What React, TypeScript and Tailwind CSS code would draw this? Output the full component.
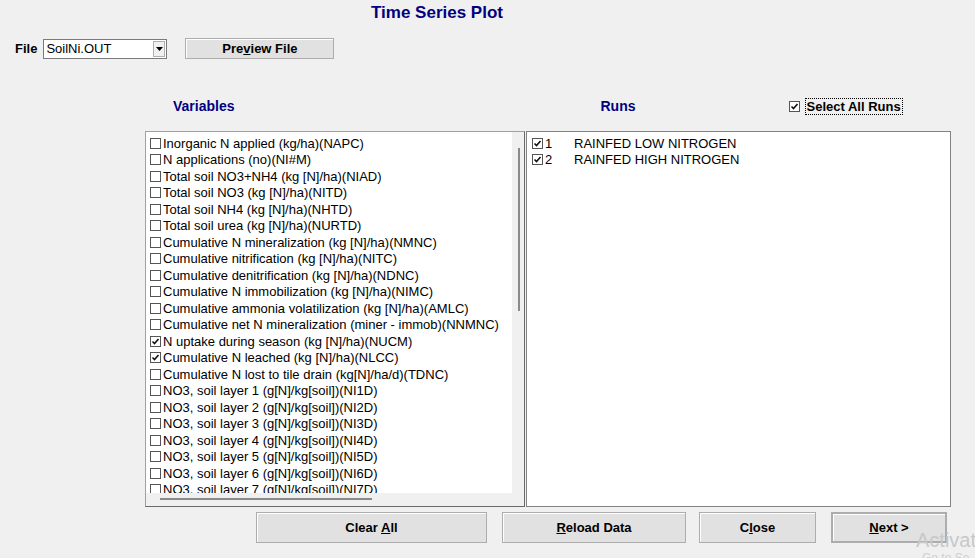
import React from 'react';

const VARIABLES: { label: string; checked: boolean }[] = [
  { label: 'Inorganic N applied (kg/ha)(NAPC)', checked: false },
  { label: 'N applications (no)(NI#M)', checked: false },
  { label: 'Total soil NO3+NH4 (kg [N]/ha)(NIAD)', checked: false },
  { label: 'Total soil NO3 (kg [N]/ha)(NITD)', checked: false },
  { label: 'Total soil NH4 (kg [N]/ha)(NHTD)', checked: false },
  { label: 'Total soil urea (kg [N]/ha)(NURTD)', checked: false },
  { label: 'Cumulative N mineralization (kg [N]/ha)(NMNC)', checked: false },
  { label: 'Cumulative nitrification (kg [N]/ha)(NITC)', checked: false },
  { label: 'Cumulative denitrification (kg [N]/ha)(NDNC)', checked: false },
  { label: 'Cumulative N immobilization (kg [N]/ha)(NIMC)', checked: false },
  { label: 'Cumulative ammonia volatilization (kg [N]/ha)(AMLC)', checked: false },
  { label: 'Cumulative net N mineralization (miner - immob)(NNMNC)', checked: false },
  { label: 'N uptake during season (kg [N]/ha)(NUCM)', checked: true },
  { label: 'Cumulative N leached (kg [N]/ha)(NLCC)', checked: true },
  { label: 'Cumulative N lost to tile drain (kg[N]/ha/d)(TDNC)', checked: false },
  { label: 'NO3, soil layer 1 (g[N]/kg[soil])(NI1D)', checked: false },
  { label: 'NO3, soil layer 2 (g[N]/kg[soil])(NI2D)', checked: false },
  { label: 'NO3, soil layer 3 (g[N]/kg[soil])(NI3D)', checked: false },
  { label: 'NO3, soil layer 4 (g[N]/kg[soil])(NI4D)', checked: false },
  { label: 'NO3, soil layer 5 (g[N]/kg[soil])(NI5D)', checked: false },
  { label: 'NO3, soil layer 6 (g[N]/kg[soil])(NI6D)', checked: false },
  { label: 'NO3, soil layer 7 (g[N]/kg[soil])(NI7D)', checked: false },
];

const RUNS = [
  { id: 1, name: 'RAINFED LOW NITROGEN' },
  { id: 2, name: 'RAINFED HIGH NITROGEN' },
];

const CheckBox: React.FC<{ checked: boolean }> = ({ checked }) => (
  <span className="flex h-[11px] w-[11px] shrink-0 items-center justify-center border border-[#555] bg-white">
    {checked && (
      <svg width="9" height="9" viewBox="0 0 9 9">
        <path d="M1.5 4.5 L3.5 6.5 L7.5 2" fill="none" stroke="#111" strokeWidth="1.6" />
      </svg>
    )}
  </span>
);

const WinButton: React.FC<{ className?: string; children: React.ReactNode }> = ({ className, children }) => (
  <button
    className={`flex items-center justify-center border border-[#adadad] bg-[#e1e1e1] text-[13px] font-bold text-black shadow-[inset_1px_1px_0_#fff] ${className ?? ''}`}
  >
    {children}
  </button>
);

export default function App() {
  return (
    <div
      className="relative h-[558px] w-[975px] overflow-hidden bg-[#f0f0f0] text-black"
      style={{ fontFamily: '"Liberation Sans", Arial, sans-serif' }}
    >
      {/* title */}
      <div className="pl-[371px] pt-[3px] text-[17px] font-bold leading-[20px] text-[#000080]">Time Series Plot</div>

      {/* file row */}
      <div className="mt-[15px] flex items-center pl-[15px]">
        <span className="text-[13px] font-bold">File</span>
        <div className="ml-[6px] flex h-[20px] w-[124px] items-center justify-between border border-[#7a7a7a] bg-white pl-[2px] pr-[1px]">
          <span className="text-[13px]">SoilNi.OUT</span>
          <span className="flex h-[16px] w-[12px] items-center justify-center border border-[#b0b0b0] bg-[#f0f0f0]">
            <svg width="7" height="4" viewBox="0 0 7 4">
              <path d="M0 0 H7 L3.5 4 Z" fill="#000" />
            </svg>
          </span>
        </div>
        <WinButton className="ml-[18px] h-[21px] w-[149px]">
          <span>
            Pre<span className="underline">v</span>iew File
          </span>
        </WinButton>
      </div>

      {/* headings */}
      <div className="mt-[38px] flex h-[18px] items-center">
        <span className="ml-[173px] text-[14px] font-bold text-[#000080]">Variables</span>
        <span className="ml-[366px] text-[14px] font-bold text-[#000080]">Runs</span>
        <div className="ml-[153px] flex items-center">
          <CheckBox checked />
          <span className="ml-[5px] border border-dotted border-black px-[1px] text-[13px] font-bold leading-[15px]">
            Select All Runs
          </span>
        </div>
      </div>

      {/* lists */}
      <div className="mt-[16px] flex h-[376px] pl-[145px]">
        <div className="flex w-[380px] flex-col border border-[#a0a0a0] border-r-[#696969] border-b-[#696969] bg-[#f0f0f0]">
          <div className="flex min-h-0 flex-1">
            <div className="flex-1 overflow-hidden bg-white pl-[4px] pt-[3px]">
              {VARIABLES.map((v) => (
                <div key={v.label} className="flex h-[16.5px] items-center whitespace-nowrap text-[13px]">
                  <CheckBox checked={v.checked} />
                  <span className="ml-[2px]">{v.label}</span>
                </div>
              ))}
            </div>
            <div className="relative w-[12px]">
              <div className="absolute left-[6px] top-[16px] h-[163px] w-[2px] bg-[#8a8a8a]" />
            </div>
          </div>
          <div className="relative h-[13px]">
            <div className="absolute left-[14px] top-[5px] h-[2px] w-[212px] bg-[#8a8a8a]" />
          </div>
        </div>
        <div className="ml-[1px] w-[425px] border border-[#828282] bg-white pl-[5px] pt-[3px]">
          {RUNS.map((r) => (
            <div key={r.id} className="flex h-[16.5px] items-center text-[13px]">
              <CheckBox checked />
              <span className="ml-[2px] w-[29px]">{r.id}</span>
              <span>{r.name}</span>
            </div>
          ))}
        </div>
      </div>

      {/* buttons */}
      <div className="mt-[5px] flex pl-[256px]">
        <WinButton className="h-[31px] w-[231px]">
          <span>
            Clear <span className="underline">A</span>ll
          </span>
        </WinButton>
        <WinButton className="ml-[15px] h-[31px] w-[184px]">
          <span>
            <span className="underline">R</span>eload Data
          </span>
        </WinButton>
        <WinButton className="ml-[13px] h-[31px] w-[117px]">
          <span>
            C<span className="underline">l</span>ose
          </span>
        </WinButton>
        <WinButton className="ml-[15px] h-[31px] w-[116px] border-2 border-[#5a5a5a]">
          <span>
            <span className="underline">N</span>ext &gt;
          </span>
        </WinButton>
      </div>

      {/* windows watermark */}
      <div className="pointer-events-none absolute left-[916px] top-[529px] text-[20px] leading-[22px] text-[#c8c8c8]">
        Activat
      </div>
      <div className="pointer-events-none absolute left-[922px] top-[551px] text-[12px] leading-[14px] text-[#cfcfcf]">
        Go to Se
      </div>
    </div>
  );
}
